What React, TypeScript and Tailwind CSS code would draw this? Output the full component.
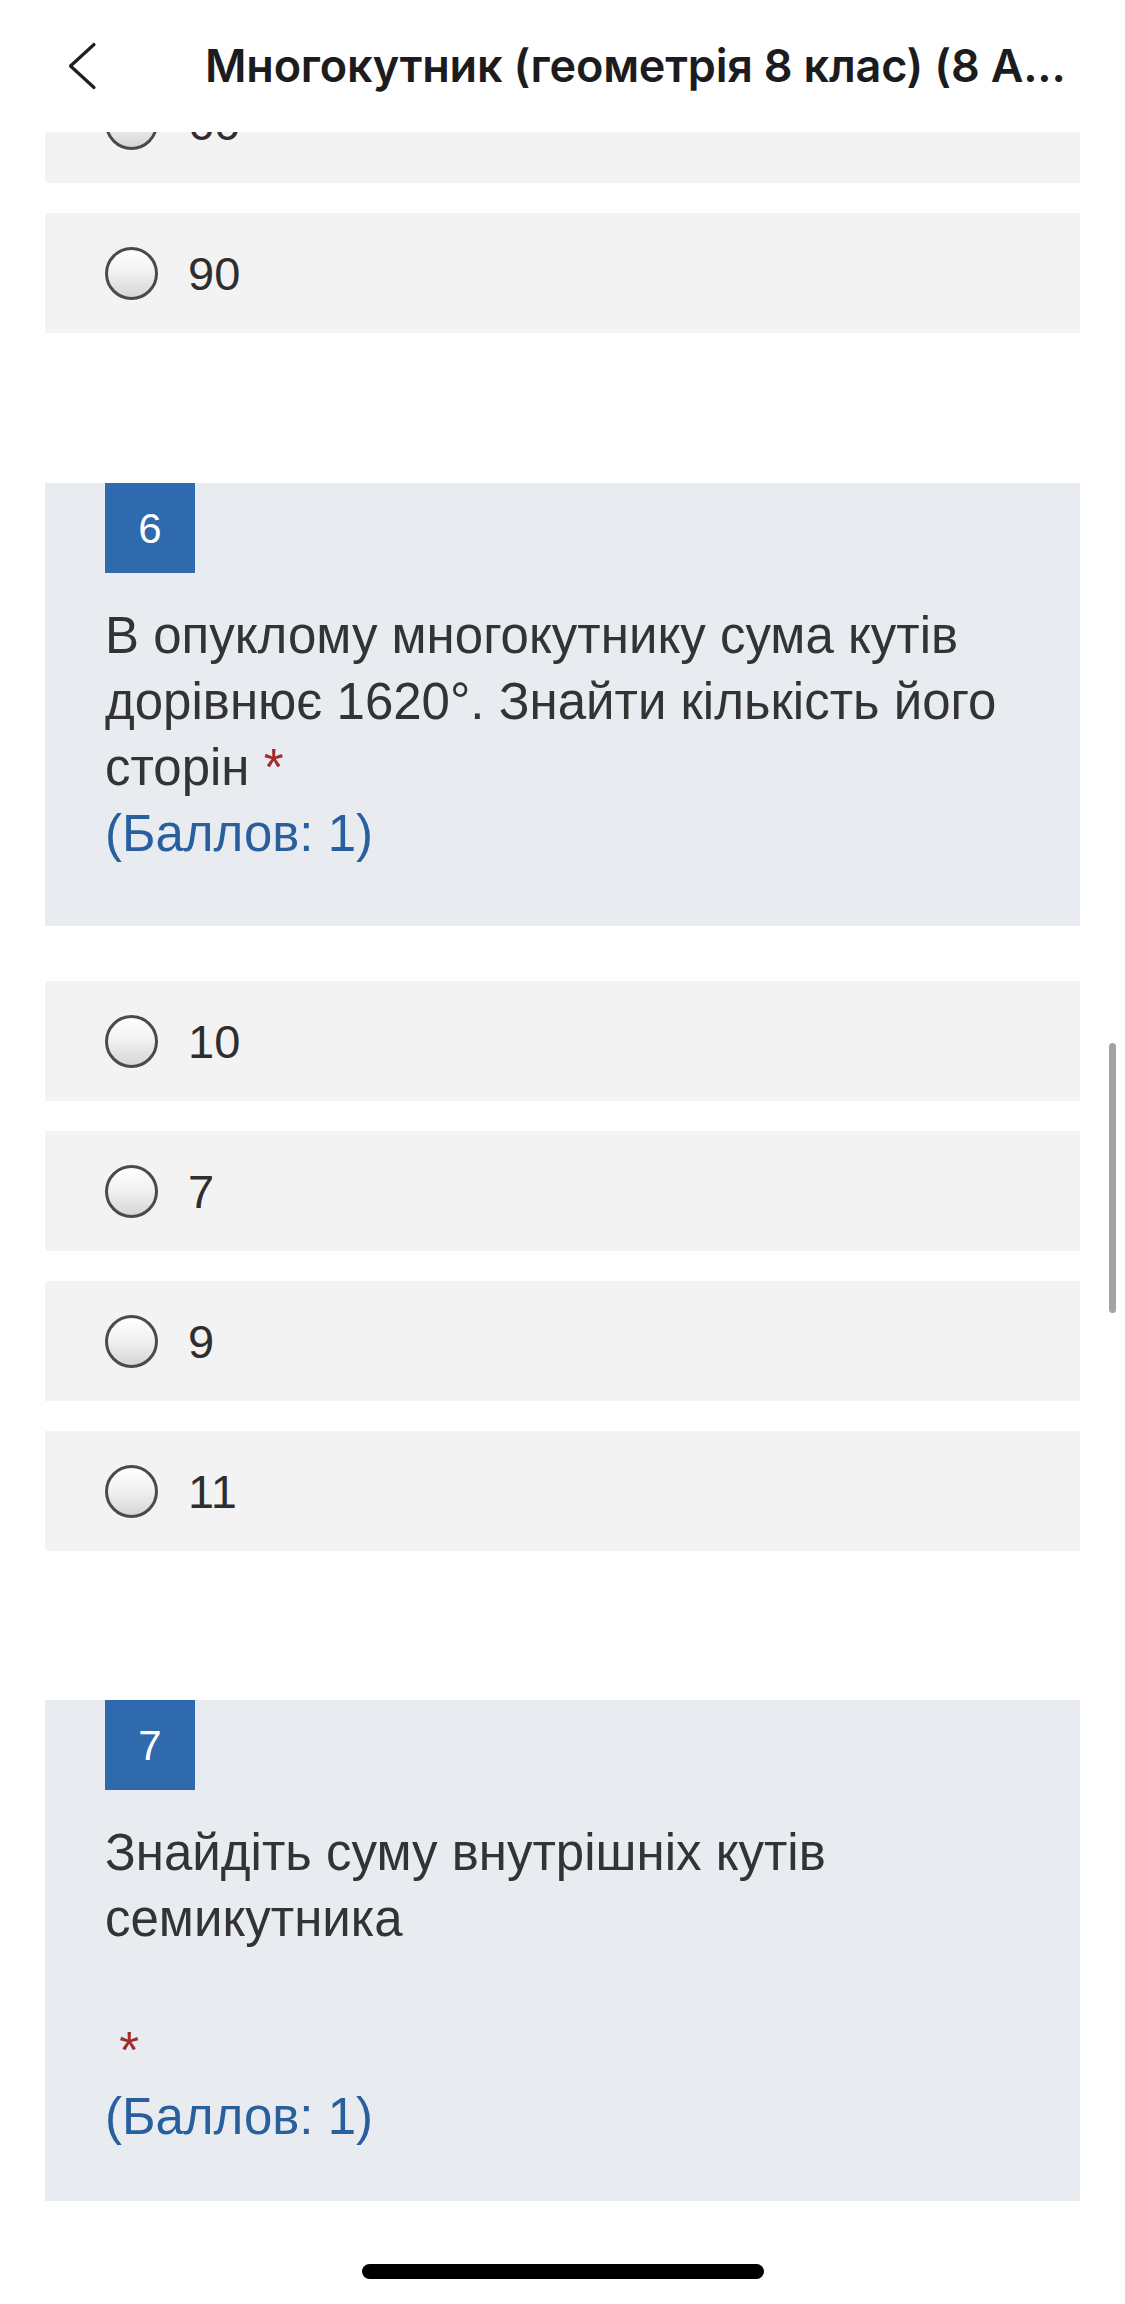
import React from "react";

type Question = {
    num: number;
    lines: React.ReactNode;
    bottomPad: string;
};

function Radio() {
    return (
        <span className="block w-[53px] h-[53px] shrink-0 rounded-full border-[3px] border-[#4a4a4a] bg-linear-to-b from-white via-[#f0f0f0] to-[#d6d6d6]" />
    );
}

function Option({ label }: { label: string }) {
    return (
        <div className="flex h-[120px] items-center bg-[#f3f3f3] pl-[60px]">
            <Radio />
            <span className="ml-[30px] text-[47px] leading-none text-[#2e2e2e]">{label}</span>
        </div>
    );
}

function Star() {
    return <span className="text-[#a32b2b]">*</span>;
}

function QuestionCard({ num, lines, bottomPad }: Question) {
    return (
        <section className={`bg-[#e8ecf0] px-[60px] ${bottomPad}`}>
            <div className="flex h-[90px] w-[90px] items-center justify-center bg-[#2e6aad] text-[42px] text-white">
                {num}
            </div>
            <div className="mt-[30px] text-[51px] leading-[66px] text-[#333333]">{lines}</div>
        </section>
    );
}

export default function App() {
    const title = "Многокутник (геометрія 8 клас) (8 А...";
    const answers = ["10", "7", "9", "11"];

    return (
        <main className="relative h-[2304px] w-[1125px] overflow-hidden bg-white font-['Liberation_Sans',Arial,sans-serif]">
            <header className="flex h-[132px] items-center">
                <svg className="ml-[66px] shrink-0" width="32" height="50" viewBox="0 0 32 50" fill="none">
                    <path d="M28 3.5 L4.5 25 L28 46.5" stroke="#1f1f1f" strokeWidth="3.2" strokeLinecap="round" strokeLinejoin="round" />
                </svg>
                <h1 className="ml-[107px] whitespace-nowrap font-['Inter',sans-serif] text-[45px] font-semibold tracking-[-0.2px] text-[#1c1c1e]">
                    {title}
                </h1>
            </header>

            <div className="px-[45px]">
                {/* option scrolled under the header */}
                <div className="h-[51px] overflow-hidden">
                    <div className="-mt-[69px]">
                        <Option label="60" />
                    </div>
                </div>
                <div className="mt-[30px]">
                    <Option label="90" />
                </div>

                <div className="mt-[150px]">
                    <QuestionCard
                        num={6}
                        bottomPad="pb-[59px]"
                        lines={
                            <>
                                <p>В опуклому многокутнику сума кутів</p>
                                <p>дорівнює 1620°. Знайти кількість його</p>
                                <p>
                                    сторін <Star />
                                </p>
                                <p className="text-[#2a5f9e]">(Баллов: 1)</p>
                            </>
                        }
                    />
                </div>

                <div className="mt-[55px] flex flex-col gap-[30px]">
                    {answers.map((a) => (
                        <Option key={a} label={a} />
                    ))}
                </div>

                <div className="mt-[149px]">
                    <QuestionCard
                        num={7}
                        bottomPad="pb-[51px]"
                        lines={
                            <>
                                <p>Знайдіть суму внутрішніх кутів</p>
                                <p>семикутника</p>
                                <p>&nbsp;</p>
                                <p>
                                    &nbsp;<Star />
                                </p>
                                <p className="text-[#2a5f9e]">(Баллов: 1)</p>
                            </>
                        }
                    />
                </div>
            </div>

            {/* scroll indicator */}
            <div className="absolute left-[1109px] top-[1043px] h-[270px] w-[7px] rounded-full bg-[#a3a3a3]" />
            {/* home indicator */}
            <div className="absolute left-[362px] top-[2264px] h-[15px] w-[402px] rounded-full bg-black" />
        </main>
    );
}
